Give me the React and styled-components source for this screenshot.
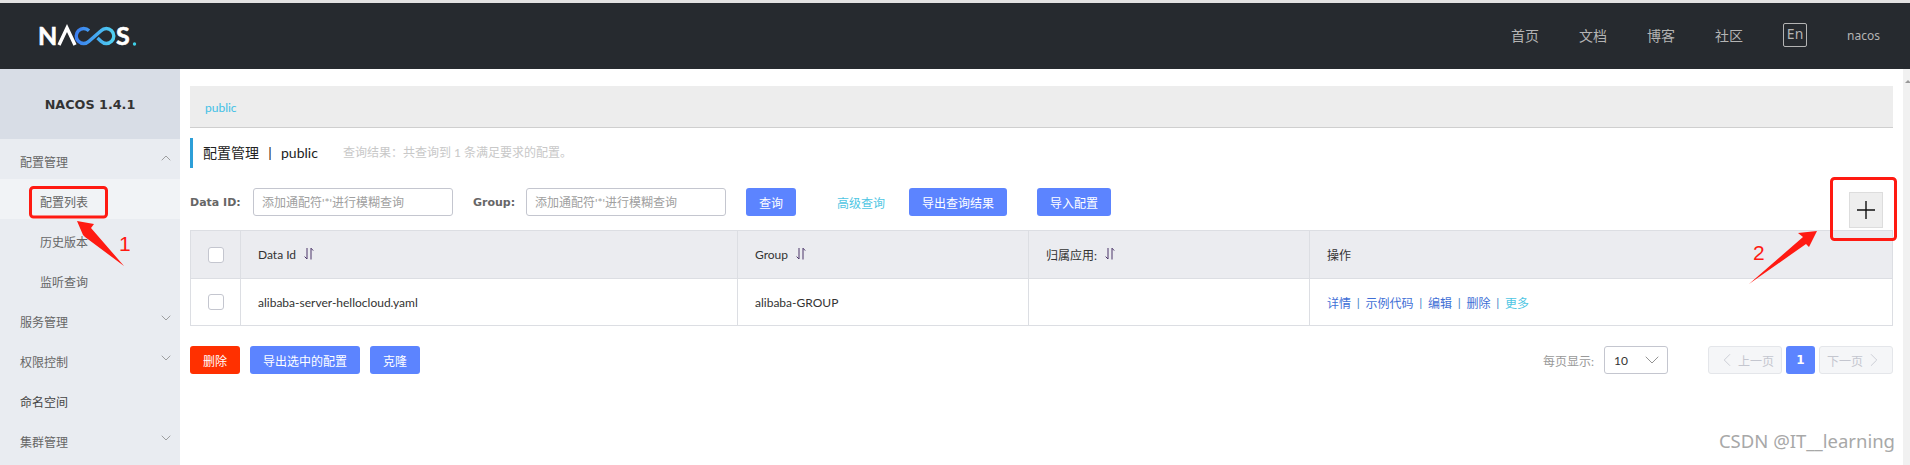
import styled, { createGlobalStyle } from 'styled-components';
import { ChevronDown, ChevronLeft, ChevronRight, ChevronUp } from 'lucide-react';

const GlobalStyle = createGlobalStyle`
  html, body { margin: 0; padding: 0; background: #fff; }
  body { font-family: Lato, "Noto Sans CJK SC", sans-serif; font-size: 12px; color: #333; }
`;

const menu = [
  { label: '配置管理', icon: 'up' },
  { label: '配置列表', sub: true, active: true },
  { label: '历史版本', sub: true },
  { label: '监听查询', sub: true },
  { label: '服务管理', icon: 'down' },
  { label: '权限控制', icon: 'down' },
  { label: '命名空间', dark: true },
  { label: '集群管理', icon: 'down' },
];

const SortIcon = () => (
  <SortSvg viewBox="0 0 10 14" fill="none" stroke="#4a3568" strokeWidth="1">
    <path d="M3 1v11L.6 9.6M7 12.5V1.2l2.2 2.4" />
  </SortSvg>
);

const Logo = () => (
  <svg width="104" height="34" viewBox="0 0 104 34">
    <defs>
      <linearGradient id="loop" x1="0" x2="1" y1="0" y2="0">
        <stop offset="0" stopColor="#3a7df0" />
        <stop offset="1" stopColor="#4fd0f0" />
      </linearGradient>
    </defs>
    <g transform="translate(0 5)">
      <text x="2" y="21" fontFamily="Lato, sans-serif" fontSize="25" fontWeight="700" fill="#fff" stroke="#fff" strokeWidth="0.6">N</text>
      <path d="M23 21 L31 4 L39 21" fill="none" stroke="#fff" strokeWidth="3.4" />
      <path
        d="M53 6.7 A7.5 7.5 0 1 0 53 17.3 L65 6.7 A7.5 7.5 0 1 1 65 17.3 L61.5 14"
        fill="none"
        stroke="url(#loop)"
        strokeWidth="3.4"
      />
      <text x="80" y="21" fontFamily="Lato, sans-serif" fontSize="25" fontWeight="700" fill="#fff" stroke="#fff" strokeWidth="0.6">S</text>
      <circle cx="98.5" cy="20" r="1.7" fill="#3fd0e8" />
    </g>
  </svg>
);

const App = () => (
  <Page>
    <GlobalStyle />
    <Header>
      <LogoWrap>
        <Logo />
      </LogoWrap>
      <Nav>
        <NavLink>首页</NavLink>
        <NavLink>文档</NavLink>
        <NavLink>博客</NavLink>
        <NavLink>社区</NavLink>
        <LangBox>En</LangBox>
        <UserName>nacos</UserName>
      </Nav>
    </Header>
    <Body>
      <Sidebar>
        <Version>NACOS 1.4.1</Version>
        {menu.map((item) => (
          <MenuRow key={item.label} $sub={item.sub} $active={item.active} $dark={item.dark}>
            {item.label}
            {item.icon === 'up' && <ChevronUp size={16} strokeWidth={1} />}
            {item.icon === 'down' && <ChevronDown size={16} strokeWidth={1} />}
          </MenuRow>
        ))}
      </Sidebar>
      <Main>
        <Crumb>public</Crumb>
        <TitleRow>
          <Title>
            配置管理<TitleSep>|</TitleSep>public
          </Title>
          <Hint>查询结果：共查询到 1 条满足要求的配置。</Hint>
        </TitleRow>
        <SearchRow>
          <FieldLabel>Data ID:</FieldLabel>
          <SearchInput placeholder="添加通配符'*'进行模糊查询" />
          <FieldLabel $gap>Group:</FieldLabel>
          <SearchInput placeholder="添加通配符'*'进行模糊查询" />
          <Button $w={50} $ml={20}>查询</Button>
          <AdvancedLink>高级查询</AdvancedLink>
          <Button $w={98} $ml={24}>导出查询结果</Button>
          <Button $w={74} $ml={30}>导入配置</Button>
        </SearchRow>
        <AddButton>
          <svg width="18" height="18" viewBox="0 0 18 18" stroke="#111" strokeWidth="1.4">
            <path d="M0 9h18M9 0v18" />
          </svg>
        </AddButton>
        <Table>
          <HeadRow>
            <CheckCell><Check /></CheckCell>
            <Cell $w={497}>Data Id<SortIcon /></Cell>
            <Cell $w={291}>Group<SortIcon /></Cell>
            <Cell $w={281}>归属应用:<SortIcon /></Cell>
            <Cell $grow>操作</Cell>
          </HeadRow>
          <DataRow>
            <CheckCell><Check /></CheckCell>
            <Cell $w={497}>alibaba-server-hellocloud.yaml</Cell>
            <Cell $w={291}>alibaba-GROUP</Cell>
            <Cell $w={281} />
            <Cell $grow>
              <Action>详情</Action>
              <Divider>|</Divider>
              <Action>示例代码</Action>
              <Divider>|</Divider>
              <Action>编辑</Action>
              <Divider>|</Divider>
              <Action>删除</Action>
              <Divider>|</Divider>
              <Action $more>更多</Action>
            </Cell>
          </DataRow>
        </Table>
        <FooterRow>
          <Button $w={50} $danger>删除</Button>
          <Button $w={110} $ml={10}>导出选中的配置</Button>
          <Button $w={50} $ml={10}>克隆</Button>
          <Pager>
            <PageSizeLabel>每页显示:</PageSizeLabel>
            <PageSize>
              10
              <ChevronDown size={24} strokeWidth={0.8} color="#777" />
            </PageSize>
            <PageButton $w={74} $mr={4}>
              <ChevronLeft size={22} strokeWidth={0.9} />
              上一页
            </PageButton>
            <PageNumber>1</PageNumber>
            <PageButton $w={74} $ml={4}>
              下一页
              <ChevronRight size={22} strokeWidth={0.9} />
            </PageButton>
          </Pager>
        </FooterRow>
      </Main>
      <ScrollTrack>
        <ScrollArrow />
      </ScrollTrack>
    </Body>
    <Marks viewBox="0 0 1910 465" fill="none">
      <rect x="30.5" y="187.5" width="76" height="29.5" rx="3" stroke="#ff1a12" strokeWidth="3" />
      <rect x="1831.5" y="178.5" width="64" height="61" rx="3" stroke="#ff1a12" strokeWidth="3" />
      <polygon points="77,221 94,224 91,228 124,266 85,237 83,235" fill="#ff1a12" />
      <polygon points="1817,231 1798,233 1803,237 1749,284 1806,244 1809,247" fill="#ff1a12" />
      <MarkNumber x="119" y="251">1</MarkNumber>
      <MarkNumber x="1753" y="260">2</MarkNumber>
    </Marks>
    <Watermark>CSDN @IT__learning</Watermark>
  </Page>
);

export default App;

const Page = styled.div`
  position: relative;
  width: 1910px;
  height: 465px;
  overflow: hidden;
  display: flex;
  flex-direction: column;
  border-top: 3px solid #e2e2e2;
  box-sizing: border-box;
`;

const Header = styled.header`
  height: 66px;
  flex: none;
  background: #262a2f;
  display: flex;
  align-items: center;
  justify-content: space-between;
  padding-left: 36px;
`;

const LogoWrap = styled.div`
  display: flex;
`;

const Nav = styled.nav`
  display: flex;
  align-items: center;
  padding-right: 30px;
`;

const NavLink = styled.span`
  font-size: 14px;
  line-height: 20px;
  color: #b4b4b4;
  width: 28px;
  margin-right: 40px;
`;

const LangBox = styled.span`
  width: 24px;
  height: 24px;
  box-sizing: border-box;
  border: 1px solid #b4b4b4;
  border-radius: 2px;
  color: #b4b4b4;
  font-family: "Noto Sans", sans-serif;
  font-size: 14px;
  line-height: 19px;
  text-align: center;
  margin-right: 40px;
  margin-top: -2px;
`;

const UserName = styled.span`
  font-family: "Noto Sans", sans-serif;
  font-size: 12px;
  line-height: 20px;
  color: #b4b4b4;
`;

const Body = styled.div`
  flex: 1;
  display: flex;
  min-height: 0;
`;

const Sidebar = styled.aside`
  width: 180px;
  flex: none;
  background: #e9ecf1;
`;

const Version = styled.div`
  height: 70px;
  background: #d8dde6;
  font-family: "DejaVu Sans", sans-serif;
  font-weight: 700;
  font-size: 12.75px;
  color: #333;
  display: flex;
  align-items: center;
  justify-content: center;
`;

const MenuRow = styled.div`
  height: 40px;
  box-sizing: border-box;
  padding: 4px 6px 0 ${(p) => (p.$sub ? '40px' : '20px')};
  display: flex;
  align-items: center;
  justify-content: space-between;
  font-size: 12px;
  color: ${(p) => (p.$dark ? '#444' : '#666')};
  background: ${(p) => (p.$active ? '#f1f3f6' : 'transparent')};

  svg {
    color: #777;
    margin-top: -6px;
  }
`;

const Main = styled.main`
  position: relative;
  flex: 1;
  min-width: 0;
  padding: 17px 10px 0;
`;

const Crumb = styled.div`
  height: 42px;
  box-sizing: border-box;
  background: #ededed;
  border-bottom: 1px solid #cfcfcf;
  padding: 12px 15px 0;
  font-size: 12px;
  line-height: 20px;
  color: #3fc0e6;
`;

const TitleRow = styled.div`
  height: 30px;
  margin-top: 10px;
  border-left: 3px solid #2d9fd8;
  padding-left: 10px;
  display: flex;
  align-items: center;
`;

const Title = styled.span`
  font-size: 14px;
  line-height: 20px;
  color: #222;
  width: 140px;
`;

const TitleSep = styled.span`
  display: inline-block;
  width: 22px;
  text-align: center;
`;

const Hint = styled.span`
  font-size: 12px;
  line-height: 20px;
  color: #c8c8c8;
`;

const SearchRow = styled.div`
  height: 28px;
  margin-top: 20px;
  display: flex;
  align-items: center;
`;

const FieldLabel = styled.span`
  font-family: "DejaVu Sans", sans-serif;
  font-weight: 700;
  font-size: 11px;
  color: #666;
  width: ${(p) => (p.$gap ? '53px' : '63px')};
  margin-left: ${(p) => (p.$gap ? '20px' : '0')};
`;

const SearchInput = styled.input`
  width: 200px;
  height: 28px;
  box-sizing: border-box;
  border: 1px solid #c4c6cf;
  border-radius: 3px;
  padding: 0 8px;
  font-family: inherit;
  font-size: 12px;
  outline: none;

  &::placeholder {
    color: #a0a0a0;
  }
`;

const Button = styled.button`
  width: ${(p) => p.$w}px;
  height: 28px;
  flex: none;
  margin-left: ${(p) => p.$ml || 0}px;
  padding: 0;
  border: 0;
  border-radius: 3px;
  background: ${(p) => (p.$danger ? '#ff3000' : '#5c84ff')};
  color: #fff;
  font-family: inherit;
  font-size: 12px;
`;

const AdvancedLink = styled.span`
  margin-left: 41px;
  color: #4fc6e3;
  font-size: 12px;
`;

const AddButton = styled.div`
  position: absolute;
  top: 123px;
  right: 20px;
  width: 34px;
  height: 36px;
  box-sizing: border-box;
  background: #eee;
  border: 1px solid #ddd;
  display: flex;
  align-items: center;
  justify-content: center;
`;

const Table = styled.div`
  margin-top: 14px;
  border: 1px solid #dcdee3;
  border-width: 1px 1px 0 1px;
`;

const HeadRow = styled.div`
  height: 48px;
  box-sizing: border-box;
  display: flex;
  background: #ebecf0;
  border-bottom: 1px solid #dcdee3;
`;

const DataRow = styled(HeadRow)`
  height: 47px;
  background: #fff;
`;

const CheckCell = styled.div`
  width: 50px;
  flex: none;
  box-sizing: border-box;
  display: flex;
  align-items: center;
  justify-content: center;
  border-right: 1px solid #dcdee3;
`;

const Check = styled.span`
  width: 16px;
  height: 16px;
  box-sizing: border-box;
  background: #fff;
  border: 1px solid #c4c6cf;
  border-radius: 3px;
`;

const Cell = styled.div`
  width: ${(p) => (p.$grow ? 'auto' : `${p.$w}px`)};
  flex: ${(p) => (p.$grow ? 1 : 'none')};
  box-sizing: border-box;
  padding-left: 17px;
  display: flex;
  align-items: center;
  font-size: 12px;
  color: #333;
  border-right: ${(p) => (p.$grow ? '0' : '1px solid #dcdee3')};
`;

const SortSvg = styled.svg`
  width: 10px;
  height: 14px;
  margin-left: 8px;
  margin-top: -2px;
`;

const Action = styled.span`
  color: ${(p) => (p.$more ? '#4fc6e3' : '#3f6fd6')};
`;

const Divider = styled.span`
  width: 14.5px;
  text-align: center;
  color: #3f7fc6;
`;

const FooterRow = styled.div`
  margin-top: 20px;
  display: flex;
  align-items: center;
`;

const Pager = styled.div`
  margin-left: auto;
  display: flex;
  align-items: center;
`;

const PageSizeLabel = styled.span`
  font-size: 12px;
  color: #999;
  margin-right: 10px;
`;

const PageSize = styled.div`
  width: 64px;
  height: 28px;
  box-sizing: border-box;
  border: 1px solid #c4c6cf;
  border-radius: 3px;
  padding: 0 3px 0 9px;
  margin-right: 40px;
  display: flex;
  align-items: center;
  justify-content: space-between;
  font-size: 12px;
  color: #333;
`;

const PageButton = styled.div`
  width: ${(p) => p.$w}px;
  height: 28px;
  box-sizing: border-box;
  margin-left: ${(p) => p.$ml || 0}px;
  margin-right: ${(p) => p.$mr || 0}px;
  background: #f5f6f8;
  border: 1px solid #e4e6ea;
  border-radius: 3px;
  display: flex;
  align-items: center;
  justify-content: center;
  font-size: 12px;
  color: #c4c6cf;
`;

const PageNumber = styled.div`
  width: 29px;
  height: 28px;
  border-radius: 3px;
  background: #5c84ff;
  color: #fff;
  font-family: "DejaVu Sans", sans-serif;
  font-size: 12px;
  font-weight: 700;
  display: flex;
  align-items: center;
  justify-content: center;
`;

const ScrollTrack = styled.div`
  width: 7px;
  flex: none;
  background: #f1f1f1;
  overflow: hidden;
`;

const ScrollArrow = styled.div`
  width: 0;
  height: 0;
  margin: 8px 0 0 2px;
  border: 3px solid transparent;
  border-bottom-color: #999;
`;

const Marks = styled.svg`
  position: absolute;
  top: -3px;
  left: 0;
  width: 1910px;
  height: 465px;
  pointer-events: none;
`;

const MarkNumber = styled.text`
  font-family: "Liberation Sans", sans-serif;
  font-size: 21px;
  fill: #ff1a12;
`;

const Watermark = styled.div`
  position: absolute;
  right: 15px;
  top: 426px;
  font-family: "Noto Sans", sans-serif;
  font-size: 18.5px;
  line-height: 24px;
  color: #a8a8a8;
`;
